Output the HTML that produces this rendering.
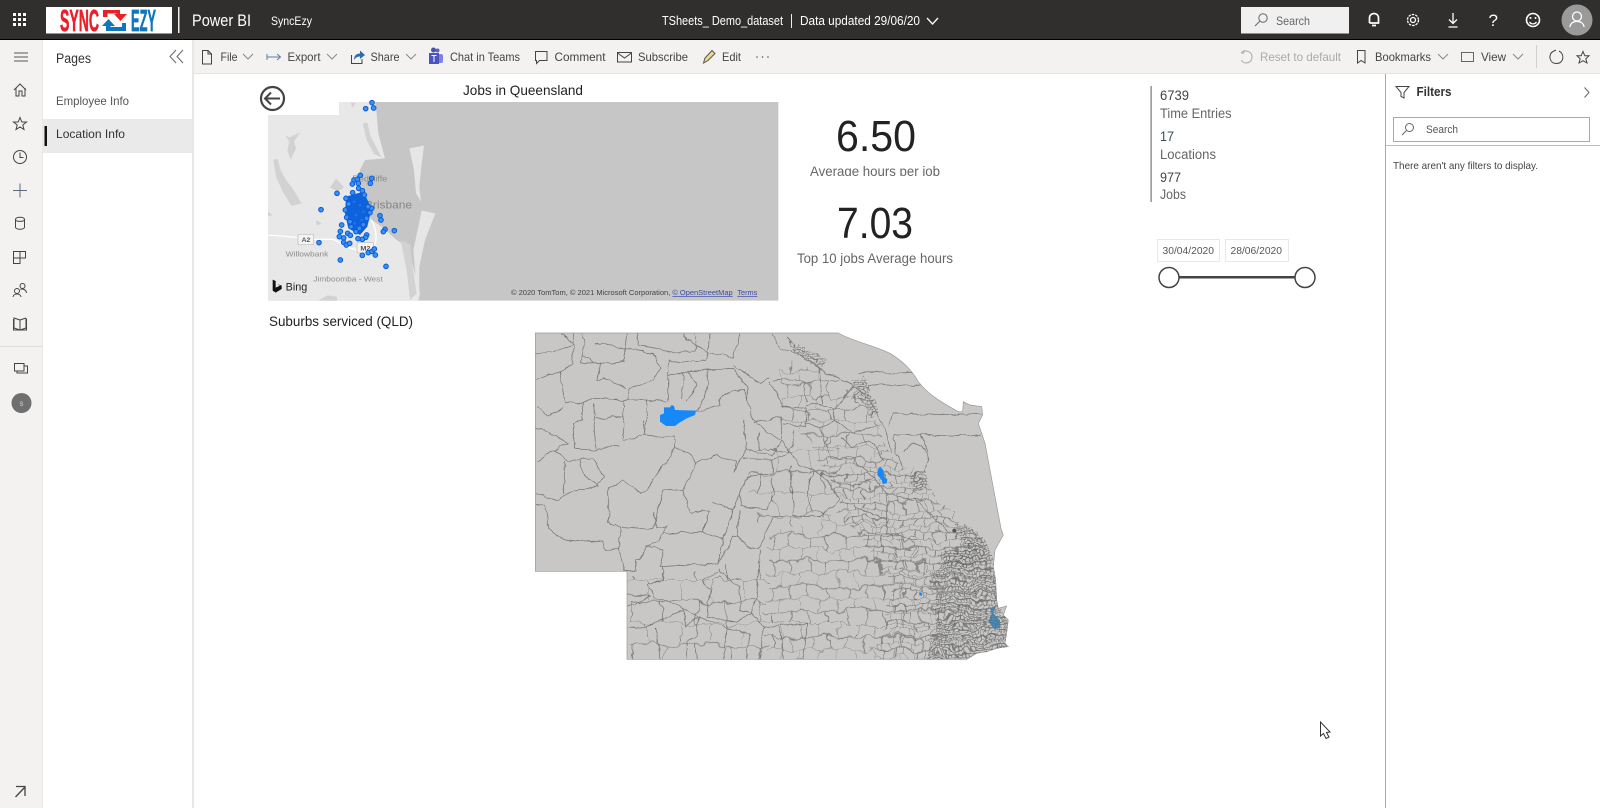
<!DOCTYPE html>
<html lang="en"><head><meta charset="utf-8"><title>TSheets_ Demo_dataset - Power BI</title>
<style>
html,body{margin:0;padding:0;width:1600px;height:808px;overflow:hidden;background:#fff}
svg{display:block;position:absolute;left:0;top:0}
text{font-family:"Liberation Sans",sans-serif;font-size:12px;fill:#444}
.w{fill:#fff}.i{fill:none;stroke:#444;stroke-width:1}
.wi{fill:none;stroke:#fff;stroke-width:1.3}
.ch{fill:none;stroke:#888;stroke-width:1}
.l{fill:none;stroke:#747474;stroke-width:2.2;stroke-linejoin:round}
</style></head><body>
<svg width="1600" height="808" viewBox="0 0 1600 808" xmlns="http://www.w3.org/2000/svg">
<defs>
<filter id="jag" filterUnits="userSpaceOnUse" x="0" y="0" width="1500" height="1050" color-interpolation-filters="sRGB"><feTurbulence type="fractalNoise" baseFrequency="0.03" numOctaves="3" seed="4"/><feDisplacementMap in="SourceGraphic" scale="16" xChannelSelector="R" yChannelSelector="G"/></filter>
<filter id="wob" filterUnits="userSpaceOnUse" x="0" y="0" width="1500" height="1050" color-interpolation-filters="sRGB"><feTurbulence type="fractalNoise" baseFrequency="0.018" numOctaves="3" seed="9"/><feDisplacementMap in="SourceGraphic" scale="44" xChannelSelector="R" yChannelSelector="G"/></filter>
<pattern id="pA" width="96" height="130" patternUnits="userSpaceOnUse"><path d="M0,0H96M0,65H96M0,0V65M48,65V130" fill="none" stroke="#747474" stroke-width="2.2"/></pattern>
<pattern id="pB" width="56" height="76" patternUnits="userSpaceOnUse"><path d="M0,0H56M0,38H56M0,0V38M28,38V76" fill="none" stroke="#747474" stroke-width="2.2"/></pattern>
<pattern id="pC" width="30" height="44" patternUnits="userSpaceOnUse"><path d="M0,0H30M0,22H30M0,0V22M15,22V44" fill="none" stroke="#747474" stroke-width="2.2"/></pattern>
<pattern id="pD" width="13" height="18" patternUnits="userSpaceOnUse"><path d="M0,0H13M0,9H13M0,0V9M6.500,9V18" fill="none" stroke="#6a6a6a" stroke-width="2.4"/></pattern>
<clipPath id="qld"><path d="M46,39L955,39C1000,65 1060,75 1110,100C1150,125 1175,150 1195,185C1225,225 1270,250 1315,275L1328,275L1330,245L1350,255L1385,260L1388,285L1375,310L1395,370L1427,540L1443,625L1450,645L1425,690L1420,740L1427,780L1430,840L1435,865L1460,858L1450,885L1465,900L1460,940L1455,970L1465,980L1430,985L1400,995L1370,1000L1340,1018L321,1018L321,754L46,754Z"/></clipPath>
<clipPath id="land"><path d="M46,39H1000L1110,100L1120,282L1105,320L1125,345V400L1210,430L1290,540L1395,660L1440,760L1480,1020H321V754H46Z"/></clipPath>
<clipPath id="c175"><rect x="780" y="150" width="180" height="26"/></clipPath>
</defs>

<!-- top bar -->
<rect width="1600" height="39" fill="#302f2d"/><rect y="39" width="1600" height="1" fill="#000"/>
<g fill="#fff"><rect x="13" y="13" width="3" height="3"/><rect x="18" y="13" width="3" height="3"/><rect x="23" y="13" width="3" height="3"/><rect x="13" y="18" width="3" height="3"/><rect x="18" y="18" width="3" height="3"/><rect x="23" y="18" width="3" height="3"/><rect x="13" y="23" width="3" height="3"/><rect x="18" y="23" width="3" height="3"/><rect x="23" y="23" width="3" height="3"/></g>
<rect x="46" y="7" width="126" height="26.500" fill="#fff"/>
<text x="60" y="31" textLength="39" lengthAdjust="spacingAndGlyphs" style="font-size:31px;font-weight:bold;fill:#e8202a;stroke:#e8202a;stroke-width:.7">SYNC</text>
<text x="131" y="31" textLength="25" lengthAdjust="spacingAndGlyphs" style="font-size:31px;font-weight:bold;fill:#1276bd;stroke:#1276bd;stroke-width:.7">EZY</text>
<path d="M103,10H120V14H127L120.500,21L114,14H116.500V13.500H107.500V17H103Z" fill="#e8202a"/>
<path d="M126,31H106V26H102L108.500,19L115,26H110.500V27H122V23H126Z" fill="#1276bd"/>
<rect x="178" y="7" width="1.500" height="26" fill="#eee"/>
<text class="w" x="192" y="26" textLength="59" lengthAdjust="spacingAndGlyphs" style="font-size:16.500px;fill:#fff">Power BI</text>
<text x="271" y="25" textLength="41" lengthAdjust="spacingAndGlyphs" style="font-size:12px;fill:#fff">SyncEzy</text>
<text x="662" y="25" textLength="121" lengthAdjust="spacingAndGlyphs" style="font-size:12.500px;fill:#fff">TSheets_ Demo_dataset</text>
<rect x="791" y="14" width="1" height="14" fill="#eee"/>
<text x="800" y="25" textLength="120" lengthAdjust="spacingAndGlyphs" style="font-size:12.500px;fill:#fff">Data updated 29/06/20</text>
<path class="wi" d="M927,18L932.500,24L938,18"/>
<rect x="1241" y="7" width="108" height="26.500" fill="#f0f0f0"/>
<circle cx="1263" cy="18" r="4.200" fill="none" stroke="#666"/><path d="M1260,21L1255,26" stroke="#666" fill="none"/>
<text x="1276" y="25" textLength="34" lengthAdjust="spacingAndGlyphs" style="font-size:12px;fill:#666">Search</text>
<path class="wi" d="M1369.500,23V18C1369.500,12 1378.500,12 1378.500,18V23H1369.500M1372,25.500H1376" style="stroke-width:1.700"/>
<circle class="wi" cx="1413" cy="20" r="5.500" stroke-dasharray="2.500 1"/><circle class="wi" cx="1413" cy="20" r="2.500"/>
<path class="wi" d="M1453,13V23M1449,19.500L1453,23.500L1457,19.500M1448.500,27H1457.500"/>
<text x="1488.500" y="26" style="font-size:17px;fill:#fff">?</text>
<circle class="wi" cx="1533" cy="20" r="6.500" style="stroke-width:1.600"/><circle cx="1530.500" cy="18" r="1" fill="#fff"/><circle cx="1535.500" cy="18" r="1" fill="#fff"/><path class="wi" d="M1529.500,22C1531,24.500 1535,24.500 1536.500,22"/>
<circle cx="1577" cy="20" r="15.500" fill="#9a9a9a"/><circle class="wi" cx="1577" cy="16.500" r="4.500"/><path class="wi" d="M1570,27C1570.500,19.500 1583.500,19.500 1584,27"/>

<!-- left rail -->
<rect y="40" width="42" height="768" fill="#f3f2f1"/><rect x="42" y="40" width="1" height="768" fill="#e8e7e6"/>
<path class="i" d="M14,53H28M14,57H28M14,61H28" style="stroke:#555"/>
<path class="i" d="M14,90L20,84L26,90M16,88V96H19V91H22V96H25V88"/>
<path class="i" d="M20,117.500L21.800,122H26.500L22.800,125L24,129.500L20,127L16,129.500L17.200,125L13.500,122H18.200Z"/>
<circle class="i" cx="20" cy="157" r="6.500"/><path class="i" d="M20,152.500V157.500H23.500"/>
<path d="M13,190.500H27M20,183.500V197.500" fill="none" stroke="#5a6a80"/>
<path class="i" d="M15.500,219.500C15.500,216.500 24.500,216.500 24.500,219.500V227C24.500,230 15.500,230 15.500,227ZM15.500,219.500C15.500,222 24.500,222 24.500,219.500"/>
<path class="i" d="M13.500,251.500H25.500V258H20V263.500H13.500ZM20,251.500V263.500M13.500,258H20"/>
<circle class="i" cx="22.500" cy="286" r="2.500"/><circle class="i" cx="17" cy="291" r="2.500"/><path class="i" d="M13,297C13.500,293 20.500,293 21,297M20.500,289.500C22,288.500 26,289 26.500,293"/>
<path class="i" d="M14,318L20,320V330L14,328ZM26,318L20,320M26,318V328L20,330"/><path class="i" d="M13.500,319V330H26.500V319"/>
<rect x="0" y="346" width="42" height="1" fill="#dedddc"/>
<path class="i" d="M14.500,363.500H24V371H14.500ZM24,366H27.500V373H17V371"/>
<circle cx="21.500" cy="403" r="10" fill="#6f6f6f"/><text x="19.500" y="406" style="font-size:8px;fill:#ccc">s</text>
<path d="M15.500,797L25,787M16,786.500H25V796" fill="none" stroke="#444" stroke-width="1.300"/>

<!-- pages pane -->
<rect x="192" y="40" width="2" height="768" fill="#e8e7e6"/>
<text x="56" y="63" textLength="35" lengthAdjust="spacingAndGlyphs" style="font-size:13.500px;fill:#333">Pages</text>
<path class="ch" d="M176,50L170,56.500L176,63M183,50L177,56.500L183,63" style="stroke:#666"/>
<text x="56" y="105" textLength="73" lengthAdjust="spacingAndGlyphs" style="font-size:12px;fill:#555">Employee Info</text>
<rect x="43" y="119" width="149" height="34" fill="#ebeaea"/>
<rect x="44.500" y="126" width="2.500" height="20" fill="#111"/>
<text x="56" y="138" textLength="69" lengthAdjust="spacingAndGlyphs" style="font-size:12px;fill:#333">Location Info</text>

<!-- toolbar -->
<rect x="194" y="40" width="1406" height="33" fill="#f3f2f1"/><rect x="194" y="73" width="1406" height="1" fill="#e3e2e1"/>
<path class="i" d="M202.500,50.500H208L211.500,54V64H202.500ZM208,50.500V54H211.500"/>
<text x="220.500" y="61" textLength="17" lengthAdjust="spacingAndGlyphs">File</text><path class="ch" d="M243,54L248,59L253,54"/>
<path d="M267,54V60M267,57H280M277,54L280.500,57L277,60" fill="none" stroke="#5a7fa8"/>
<text x="287.500" y="61" textLength="33" lengthAdjust="spacingAndGlyphs">Export</text><path class="ch" d="M327,54L332,59L337,54"/>
<path class="i" d="M351.500,55V63.500H362V59"/><path d="M354,60C354,55 357,53.500 360,53.500V50.500L365,55L360,59V56.500C357.500,56.500 355.500,57.500 354,60Z" fill="#2f6ea8"/>
<text x="370.500" y="61" textLength="29" lengthAdjust="spacingAndGlyphs">Share</text><path class="ch" d="M406,54L411,59L416,54"/>
<circle cx="437.500" cy="50.500" r="2" fill="#5d62c4"/><rect x="435" y="54" width="8" height="9" rx="2" fill="#7b83eb"/><circle cx="433.500" cy="50" r="2.500" fill="#4a50b0"/><rect x="429" y="53" width="10" height="11" fill="#4b53bc"/><path d="M431.500,55.500H436.500M434,55.500V62" stroke="#fff" fill="none"/>
<text x="450" y="61" textLength="70" lengthAdjust="spacingAndGlyphs">Chat in Teams</text>
<path class="i" d="M535.500,51.500H547V60.500H539.500L536.500,63.500V60.500H535.500Z"/>
<text x="554.500" y="61" textLength="51" lengthAdjust="spacingAndGlyphs">Comment</text>
<path class="i" d="M617.500,52.500H631.500V62H617.500ZM617.500,53L624.500,58L631.500,53"/>
<text x="638" y="61" textLength="50" lengthAdjust="spacingAndGlyphs">Subscribe</text>
<path d="M703.500,63L705,58L712,50.500L715,53.500L708,60.500Z" fill="#f0d890" stroke="#555"/>
<text x="722" y="61" textLength="19" lengthAdjust="spacingAndGlyphs">Edit</text>
<g fill="#555"><circle cx="757" cy="57" r=".8"/><circle cx="762.500" cy="57" r=".8"/><circle cx="768" cy="57" r=".8"/></g>
<path d="M1241,53H1244V50M1241,53C1244,49 1252,51 1252,57C1252,61 1249,63 1246,63C1243.500,63 1242,61.500 1241.500,60" fill="none" stroke="#aaa"/>
<text x="1260" y="61" textLength="81" lengthAdjust="spacingAndGlyphs" style="fill:#aaa">Reset to default</text>
<path class="i" d="M1357.500,50.500H1365V63L1361.200,60.500L1357.500,63Z"/>
<text x="1375" y="61" textLength="56" lengthAdjust="spacingAndGlyphs">Bookmarks</text><path class="ch" d="M1438,54L1443,59L1448,54"/>
<rect x="1461.500" y="52.500" width="12" height="9" fill="none" stroke="#666"/>
<text x="1481" y="61" textLength="25" lengthAdjust="spacingAndGlyphs">View</text><path class="ch" d="M1513,54L1518,59L1523,54"/>
<rect x="1536" y="45" width="1" height="23" fill="#d0d0d0"/>
<path class="i" d="M1553,51.500C1548,54 1549,63.500 1556.500,63.500C1564,63.500 1565,54 1559,51M1553,51.500L1556,50"/>
<path class="i" d="M1583,51.500L1584.800,55.800H1589L1585.800,58.800L1587,63L1583,60.700L1579,63L1580.200,58.800L1577,55.800H1581.200Z"/>

<!-- filter pane -->
<rect x="1385" y="74" width="1" height="734" fill="#aaa"/>
<path class="i" d="M1396,86.500H1409L1404,92.500V98L1401,96.500V92.500Z"/>
<text x="1416.500" y="96" textLength="35" lengthAdjust="spacingAndGlyphs" style="font-size:12.500px;font-weight:bold;fill:#333">Filters</text>
<path class="ch" d="M1584.500,87.500L1589,92.500L1584.500,97.500" style="stroke:#666"/>
<rect x="1393.500" y="117.500" width="196" height="24" fill="#fff" stroke="#aaa"/>
<circle class="i" cx="1409.500" cy="127.500" r="4" style="stroke:#666"/><path class="i" d="M1406.500,130.500L1402,135" style="stroke:#666"/>
<text x="1426" y="133" textLength="32" lengthAdjust="spacingAndGlyphs" style="font-size:11px;fill:#555">Search</text>
<rect x="1386" y="145" width="214" height="1" fill="#bbb"/>
<text x="1393" y="169" textLength="145" lengthAdjust="spacingAndGlyphs" style="font-size:10.500px;fill:#444">There aren't any filters to display.</text>

<!-- titles -->
<text x="463" y="95" textLength="120" lengthAdjust="spacingAndGlyphs" style="font-size:14px;fill:#222">Jobs in Queensland</text>
<text x="269" y="326" textLength="144" lengthAdjust="spacingAndGlyphs" style="font-size:14px;fill:#222">Suburbs serviced (QLD)</text>

<!-- bing map -->
<g transform="translate(250,80) scale(.33333)">
<path d="M267,66H1585V662H54V105H267Z" fill="#c6c6c6"/>
<path d="M54,105H267V66H375L380,100L385,160L405,235L345,240L330,270L325,300L345,340L345,385L365,420L395,440L440,480L470,500L490,560L510,640L505,662H54Z" fill="#e8e8e8"/>
<path d="M478,205L522,197L514,260L508,320L513,365L498,340L492,270ZM515,392L556,400L525,480L508,560L508,640L498,600L490,510L505,440Z" fill="#e6e6e6"/>
<g fill="#d2d2d2">
<path d="M105,165L118,172L150,158L132,185L138,205L122,240L112,210L118,185Z"/>
<path d="M70,240L82,236L92,270L108,300L128,325L155,370L125,378L98,335L78,290Z"/>
<path d="M240,322L258,295L282,322L262,335Z"/>
<path d="M338,130L352,128L362,170L395,232L372,222L350,180Z"/>
<path d="M452,482L480,492L488,560L500,640L480,660L470,570Z"/>
<path d="M205,662L232,646L260,650L262,662Z"/><path d="M54,395L68,405L54,410ZM198,420L215,430L200,436ZM303,68L318,68L306,84Z"/>
</g>
<path d="M54,465L140,472M192,478L250,478L300,505L325,510M372,500C385,470 375,440 365,420" fill="none" stroke="#fff" stroke-width="4"/>
<rect x="144" y="463" width="47" height="31" rx="4" fill="#f4f4f4" stroke="#bbb" stroke-width="2"/>
<text x="155" y="486" textLength="26" lengthAdjust="spacingAndGlyphs" style="font-size:19px;font-weight:bold;fill:#555">A2</text>
<rect x="321" y="488" width="50" height="31" rx="4" fill="#f4f4f4" stroke="#bbb" stroke-width="2"/>
<text x="331" y="511" textLength="30" lengthAdjust="spacingAndGlyphs" style="font-size:19px;font-weight:bold;fill:#555">M2</text>
<text x="307" y="304" textLength="105" lengthAdjust="spacingAndGlyphs" style="font-size:25px;fill:#8c8c8c">Redcliffe</text>
<text x="345" y="386" textLength="141" lengthAdjust="spacingAndGlyphs" style="font-size:34px;fill:#858585">Brisbane</text>
<text x="107" y="530" textLength="128" lengthAdjust="spacingAndGlyphs" style="font-size:22px;fill:#8c8c8c">Willowbank</text>
<text x="190" y="604" textLength="208" lengthAdjust="spacingAndGlyphs" style="font-size:22px;fill:#8c8c8c">Jimboomba - West</text>
<path d="M68,599L77,603V623L90,617L82,612L95,617V627L77,638L68,632Z" fill="#111"/>
<text x="107" y="632" textLength="65" lengthAdjust="spacingAndGlyphs" style="font-size:32px;fill:#222">Bing</text>
<text x="783" y="645" textLength="478" lengthAdjust="spacingAndGlyphs" style="font-size:21px;fill:#444">© 2020 TomTom, © 2021 Microsoft Corporation,</text>
<text x="1267" y="645" textLength="181" lengthAdjust="spacingAndGlyphs" style="font-size:21px;fill:#3a4ca8;text-decoration:underline">© OpenStreetMap</text>
<text x="1462" y="645" textLength="60" lengthAdjust="spacingAndGlyphs" style="font-size:21px;fill:#3a4ca8;text-decoration:underline">Terms</text>
<path d="M288,350L340,335L365,385L352,440L330,465L295,445L285,400Z" fill="#0d62de"/>
<g fill="#3a90f2" stroke="#0c5ad4" stroke-width="3">
<circle cx="366" cy="68" r="7"/><circle cx="371" cy="84" r="7"/><circle cx="347" cy="86" r="7"/><circle cx="331" cy="286" r="7"/><circle cx="365" cy="295" r="7"/><circle cx="361" cy="310" r="7"/><circle cx="312" cy="300" r="7"/><circle cx="322" cy="298" r="7"/><circle cx="307" cy="312" r="7"/><circle cx="325" cy="310" r="7"/><circle cx="326" cy="325" r="7"/><circle cx="337" cy="332" r="7"/><circle cx="261" cy="340" r="7"/><circle cx="213" cy="389" r="7"/><circle cx="365" cy="385" r="7"/><circle cx="360" cy="398" r="7"/><circle cx="390" cy="407" r="7"/><circle cx="393" cy="420" r="7"/><circle cx="405" cy="448" r="7"/><circle cx="400" cy="455" r="7"/><circle cx="433" cy="452" r="7"/><circle cx="275" cy="435" r="7"/><circle cx="271" cy="454" r="7"/><circle cx="268" cy="470" r="7"/><circle cx="281" cy="474" r="7"/><circle cx="293" cy="460" r="7"/><circle cx="301" cy="466" r="7"/><circle cx="281" cy="487" r="7"/><circle cx="289" cy="495" r="7"/><circle cx="299" cy="490" r="7"/><circle cx="207" cy="488" r="7"/><circle cx="271" cy="540" r="7"/><circle cx="408" cy="559" r="7"/><circle cx="337" cy="526" r="7"/><circle cx="355" cy="518" r="7"/><circle cx="366" cy="514" r="7"/><circle cx="373" cy="507" r="7"/><circle cx="376" cy="525" r="7"/><circle cx="350" cy="465" r="7"/><circle cx="347" cy="472" r="7"/><circle cx="337" cy="478" r="7"/><circle cx="324" cy="476" r="7"/><circle cx="286" cy="390" r="7"/><circle cx="290" cy="412" r="7"/>
<circle cx="288" cy="355" r="7"/><circle cx="296" cy="372" r="7"/><circle cx="308" cy="338" r="7"/><circle cx="343" cy="345" r="7"/><circle cx="300" cy="425" r="7"/><circle cx="303" cy="440" r="7"/><circle cx="318" cy="455" r="7"/><circle cx="340" cy="434" r="7"/><circle cx="350" cy="415" r="7"/><circle cx="354" cy="380" r="7"/><circle cx="328" cy="445" r="7"/>
</g>
<g fill="#1f74e8"><circle cx="312" cy="365" r="4"/><circle cx="330" cy="375" r="4"/><circle cx="318" cy="405" r="4"/><circle cx="335" cy="420" r="4"/><circle cx="314" cy="430" r="4"/><circle cx="340" cy="395" r="4"/></g>
</g>

<!-- KPI -->
<text x="836" y="151" textLength="80" lengthAdjust="spacingAndGlyphs" style="font-size:44px;fill:#222">6.50</text>
<g clip-path="url(#c175)"><text x="810" y="176" textLength="130" lengthAdjust="spacingAndGlyphs" style="font-size:14px;fill:#666">Average hours per job</text></g>
<text x="837" y="238" textLength="76" lengthAdjust="spacingAndGlyphs" style="font-size:44px;fill:#222">7.03</text>
<text x="797" y="263" textLength="156" lengthAdjust="spacingAndGlyphs" style="font-size:14px;fill:#666">Top 10 jobs Average hours</text>

<!-- card -->
<rect x="1150.500" y="86" width="1.200" height="116" fill="#777"/>
<text x="1160" y="100" textLength="29" lengthAdjust="spacingAndGlyphs" style="font-size:13.500px;fill:#444">6739</text>
<text x="1160" y="118" textLength="71.500" lengthAdjust="spacingAndGlyphs" style="font-size:13.500px;fill:#666">Time Entries</text>
<text x="1160" y="141" textLength="14" lengthAdjust="spacingAndGlyphs" style="font-size:13.500px;fill:#3a4c5c">17</text>
<text x="1160" y="159" textLength="56" lengthAdjust="spacingAndGlyphs" style="font-size:13.500px;fill:#666">Locations</text>
<text x="1160" y="182" textLength="21" lengthAdjust="spacingAndGlyphs" style="font-size:13.500px;fill:#444">977</text>
<text x="1160" y="199" textLength="26" lengthAdjust="spacingAndGlyphs" style="font-size:13.500px;fill:#666">Jobs</text>

<!-- slicer -->
<rect x="1157.500" y="239.500" width="62" height="22" fill="#fff" stroke="#e8e8e8"/>
<rect x="1225.500" y="239.500" width="63" height="22" fill="#fff" stroke="#e8e8e8"/>
<text x="1162.500" y="254" textLength="51.500" lengthAdjust="spacingAndGlyphs" style="font-size:10.500px;fill:#555">30/04/2020</text>
<text x="1230.500" y="254" textLength="51.500" lengthAdjust="spacingAndGlyphs" style="font-size:10.500px;fill:#555">28/06/2020</text>
<rect x="1169" y="276" width="136" height="2.500" fill="#444"/>
<circle cx="1169" cy="277.500" r="10" fill="#fff" stroke="#444" stroke-width="1.500"/>
<circle cx="1305" cy="277.500" r="10" fill="#fff" stroke="#444" stroke-width="1.500"/>

<!-- back button -->
<circle cx="272.500" cy="98.500" r="11.500" fill="#fff" stroke="#444" stroke-width="2.200"/>
<path d="M265,98.500H280M271,92.500L265,98.500L271,104.500" fill="none" stroke="#444" stroke-width="2"/>

<!-- filled map -->
<g transform="translate(520,320) scale(.33333)">
<path d="M46,39L955,39C1000,65 1060,75 1110,100C1150,125 1175,150 1195,185C1225,225 1270,250 1315,275L1328,275L1330,245L1350,255L1385,260L1388,285L1375,310L1395,370L1427,540L1443,625L1450,645L1425,690L1420,740L1427,780L1430,840L1435,865L1460,858L1450,885L1465,900L1460,940L1455,970L1465,980L1430,985L1400,995L1370,1000L1340,1018L321,1018L321,754L46,754Z" fill="#c8c7c5" stroke="#999" stroke-width="2"/>
<g clip-path="url(#qld)">
<g clip-path="url(#land)">
<g filter="url(#wob)">
<path d="M690,340L800,330L960,350L960,560L900,610L740,640L690,560Z" fill="url(#pA)"/>
<path d="M330,770L740,720L740,1040L330,1040Z" fill="url(#pA)"/>
<path d="M740,640L900,610L960,560L1010,600L1100,600L1200,700L1280,800L1280,1040L730,1040Z" fill="url(#pB)"/>
<path d="M780,120L900,150L1000,220L1080,320L1100,400L1000,420L900,440L860,350L780,300Z" fill="url(#pB)"/>
<path d="M900,440L1000,420L1090,390L1220,480L1285,570L1390,660L1440,770L1470,1040L1060,1040L1120,790L1000,640L950,540Z" fill="url(#pC)"/>
<path d="M1230,780L1290,700L1380,680L1440,760L1480,1040L1220,1040L1250,880Z" fill="url(#pD)"/>
<path d="M1250,700L1400,650L1430,720L1300,750Z" fill="url(#pD)"/>
<path d="M800,60L860,70L925,130L900,145L830,100Z" fill="url(#pD)"/>
<path d="M990,180L1030,170L1050,230L1080,280L1060,295L1005,240Z" fill="url(#pD)"/>
<path d="M1170,460L1225,455L1225,500L1185,525Z" fill="url(#pD)"/>
<path d="M1290,590L1360,630L1410,690L1360,700L1300,640Z" fill="url(#pD)"/>
</g>
</g>
<g filter="url(#jag)">
<path class="l" d="M46,100L100,95L155,75L160,40M125,40L160,75L160,130L120,155L50,180M120,155L135,250L185,252L225,235L305,240L385,240L440,245M185,40L195,55L185,105L180,130L240,130L310,125L315,85L325,40M225,70L320,85L400,100L420,145L400,180L330,205L325,240M185,105L225,130M240,130L230,185L250,175L320,205"/>
<path class="l" d="M445,125V240M445,125L560,120L570,40M490,40L500,60L570,100L640,110L660,40M350,40L355,75L410,85L450,100L530,90L525,40M445,165L560,150L565,190L550,240L530,275L600,255L600,235L640,210L670,205L700,300L720,320L780,360M490,160L485,240M505,155L530,200L500,245"/>
<path class="l" d="M50,260L85,290L130,260M50,320L90,340L145,370L100,390L50,430M190,250L190,300L160,310L165,385L220,390L300,375M220,250L225,385M310,245L310,360L375,345L385,240M225,295L310,290M370,300L375,345L420,350L465,345L465,385L380,510L365,520L310,480L265,505M465,385L510,400L525,430L490,510L510,575L570,575M525,430L590,405L650,425L640,455L680,390L670,300"/>
<path class="l" d="M100,390L145,420L220,415L250,470L225,500L135,520L115,545L50,520M135,420L130,520M180,420L185,460L235,500M48,550L75,555L85,625L130,660L250,665L255,690L295,685L305,620L265,605L265,505M310,620L400,625L430,510L490,510M400,580L410,625L440,615L420,660L380,680L365,710L345,720L345,755L315,750L295,685"/>
<path class="l" d="M580,545L640,570L660,520L680,470L760,460L755,420L670,415M660,520L665,560L740,570L760,520L755,470M570,575L550,635L610,660L640,570M610,660L595,730L420,740L430,690L380,680M430,640L550,635M660,570L655,650L680,680L715,690L760,590L790,590M595,730L640,650L655,650M595,745L605,760L660,800L660,870L690,880L710,830L720,690"/>
<path class="l" d="M545,785L600,750M545,785L570,810L560,890L650,905L695,880L730,920L860,910M385,795L430,780L430,740M385,795L400,830L470,855L535,890L620,925L690,940M321,825L390,830L321,860M321,920L370,925L490,870L500,920L535,890L530,950L500,965L500,1018M620,925L610,1018M690,940L680,1018M730,920L720,1018M780,915L790,1018M860,910L850,1018M410,925L420,1018"/>
<path class="l" d="M680,390L760,405L785,360L785,290L700,310M785,260L860,265L860,320L790,310M860,260L890,250L940,265L945,300L900,325L860,310M755,420L810,400L830,430L880,450L920,480L960,540M810,440L820,590L900,590L960,540M760,180L800,175L850,190L860,250M750,185L790,260M640,135L720,190L750,175M560,150L640,145L680,200L680,240M755,40L780,85L830,100L900,140L920,160L990,190L1050,240L1090,310L1115,400M900,140L905,250M1000,200L945,265M945,300L1000,340L1090,310M900,325L930,410L1000,420M785,360L830,430"/>
<path class="l" d="M1015,157H1180M1050,195H1200M1050,195L1050,215M1120,282H1385M1105,320L1120,282M1125,345H1385M1125,345V400L1150,440M1150,400C1170,350 1220,370 1225,420L1210,460M1200,345L1225,400"/>
<path class="l" d="M960,350L1000,380L1050,360L1090,420M1000,420L1060,470L1100,520L1180,540M880,450L860,520L880,580M930,480L1000,500L1060,470M1100,520L1100,640L1190,660M1000,560L1100,600M1190,540L1290,640"/>
</g>
<path d="M432,262L450,262L455,255L462,258L465,270L528,272L525,285L500,295L475,310L465,318L438,318L420,305L420,285L432,280Z" fill="#1688f8"/>
<path d="M1080,440L1090,450L1092,470L1102,478L1100,490L1088,492L1085,480L1072,465L1073,450Z" fill="#1688f8"/>
<path d="M1198,815L1207,820L1205,828L1198,826Z" fill="#1688f8"/>
<path d="M1410,865L1425,862L1420,880L1440,900L1440,925L1420,925L1405,905L1415,880Z" fill="#3a7eac" opacity=".85"/>
<circle cx="1303" cy="632" r="6" fill="#555"/>
</g>
</g>

<!-- cursor -->
<path d="M1320.500,722V736L1323.500,733.500L1326,738.500L1329,737L1326.500,732.500L1330,732Z" fill="#fff" stroke="#333"/>
</svg>
</body></html>
